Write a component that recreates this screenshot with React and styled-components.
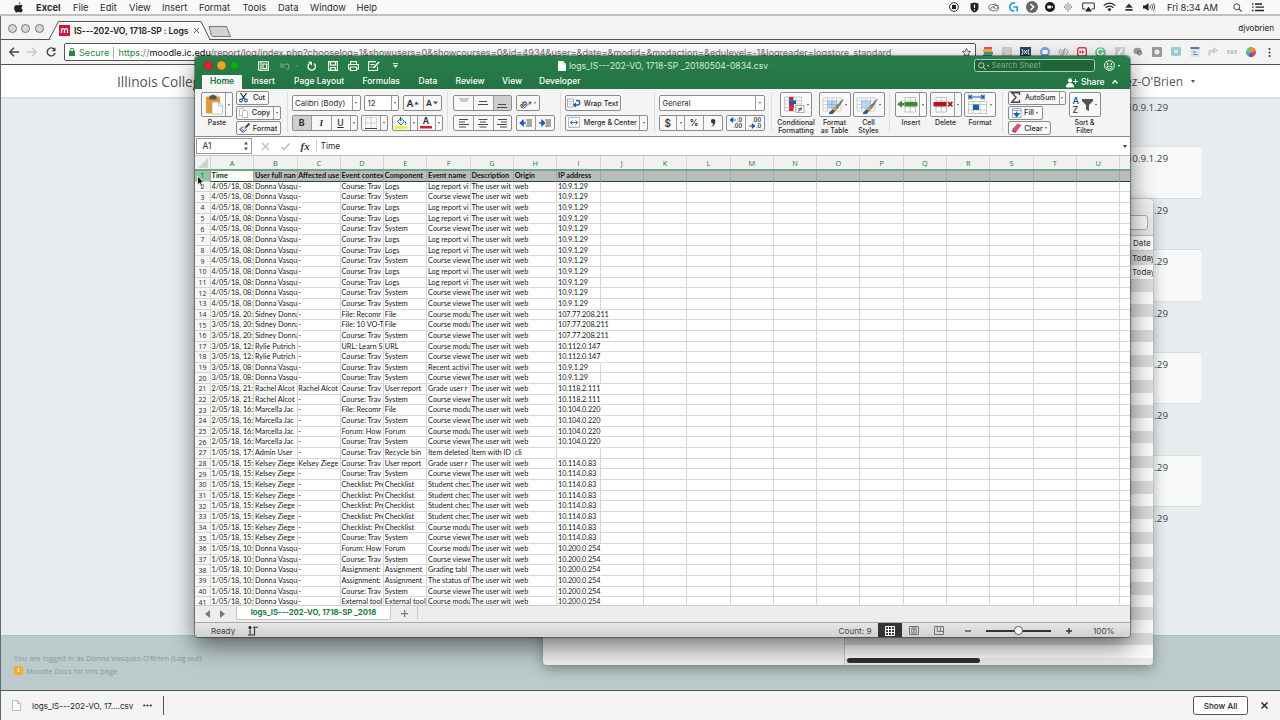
import React from "react";
import styled, { createGlobalStyle, css } from "styled-components";

const Global = createGlobalStyle`
  * { box-sizing: border-box; }
  html, body { margin: 0; padding: 0; overflow: hidden; }
  body { font-family: Inter, "Liberation Sans", sans-serif; color: #2b2b2b; }
  svg { display: block; flex: none; overflow: visible; }
`;

/* ---------- shared ---------- */
const Desktop = styled.div`
  position: relative;
  width: 1280px;
  height: 720px;
  overflow: hidden;
  display: flex;
  flex-direction: column;
  background: #e7ecef;
`;
const Text = styled.span`
  white-space: nowrap;
  flex: none;
  font-size: ${(p) => p.$size || 8}px;
  font-weight: ${(p) => p.$weight || 400};
  letter-spacing: ${(p) => p.$track || 0}px;
  color: ${(p) => p.$color || "inherit"};
  margin-left: ${(p) => p.$ml || 0}px;
  width: ${(p) => (p.$w ? p.$w + "px" : "auto")};
`;
const Caret = styled.span`
  flex: none;
  width: 0;
  height: 0;
  margin-left: ${(p) => p.$ml || 0}px;
  border: ${(p) => p.$s || 2}px solid transparent;
  border-top: ${(p) => (p.$s || 2) * 1.4}px solid ${(p) => p.$color || "#555"};
  border-bottom: 0;
`;
const Icon = ({ w = 12, h = w, box, children, ...rest }) => (
  <svg width={w} height={h} viewBox={box || `0 0 ${w} ${h}`} fill="none" {...rest}>
    {children}
  </svg>
);

/* ---------- mac menu bar ---------- */
const MenuBar = styled.header`
  height: 16px;
  flex: none;
  display: flex;
  align-items: center;
  background: #f9f9f9;
  border-bottom: 2px solid #bcc1c5;
  padding: 0 7px 0 13px;
  font-size: 9.4px;
`;
const MenuItem = styled.span`
  width: ${(p) => p.$w}px;
  flex: none;
  white-space: nowrap;
  font-weight: ${(p) => (p.$bold ? 700 : 400)};
`;
const Tray = styled.div`
  margin-left: auto;
  display: flex;
  align-items: center;
`;
const Slot = styled.span`
  width: ${(p) => p.$w}px;
  flex: none;
  display: flex;
  align-items: center;
  justify-content: center;
`;

/* ---------- browser ---------- */
const Browser = styled.main`
  flex: 1;
  display: flex;
  flex-direction: column;
  border-left: 1px solid #63686b;
  min-height: 0;
`;
const TabStrip = styled.div`
  height: 24px;
  flex: none;
  display: flex;
  background: #f3f3f3;
  border-bottom: 1px solid #555;
`;
const Dots = styled.div`
  display: flex;
  gap: 4.6px;
  padding: 8px 0 0 6.6px;
  width: 49px;
`;
const Dot = styled.i`
  width: 9px;
  height: 9px;
  border-radius: 50%;
  background: ${(p) => p.$c};
  border: 1px solid ${(p) => p.$b || p.$c};
`;
const BrowserTab = styled.div`
  position: relative;
  width: 160px;
  height: 24px;
  display: flex;
  align-items: center;
  padding: 5px 0 0 9px;
`;
const TabShape = styled.svg`
  position: absolute;
  inset: 0;
`;
const TabBody = styled.div`
  position: relative;
  display: flex;
  align-items: center;
  flex: 1;
  height: 14px;
`;
const Account = styled.div`
  margin-left: auto;
  padding: 7px 6px 0 0;
  font-size: 8.1px;
  color: #222;
`;
const Toolbar = styled.div`
  height: 25px;
  flex: none;
  display: flex;
  align-items: center;
  background: #f3f3f3;
  border-bottom: 1px solid #555;
  padding: 0 1px 0 5px;
`;
const Omnibox = styled.div`
  width: 913px;
  height: 18px;
  margin-left: 5px;
  border: 1px solid #555;
  border-radius: 2px;
  background: #fff;
  display: flex;
  align-items: center;
  padding: 0 4px 0 4px;
  font-size: 9.1px;
`;
const SecureMark = styled.span`
  color: #2c8541;
  width: 35px;
  flex: none;
  margin: 0 4.5px 0 4px;
  padding-right: 3px;
  border-right: 1px solid #9aa;
  white-space: nowrap;
`;
const Url = styled.span`
  flex: 1;
  color: #707070;
  white-space: nowrap;
  letter-spacing: ${(p) => p.$track}px;
  b { font-weight: 400; color: #111; }
  em { font-style: normal; color: #2c8541; }
`;
const Extensions = styled.div`
  display: flex;
  margin-left: 3px;
`;
const SiteHeader = styled.div`
  height: 34px;
  flex: none;
  background: #fff;
  border-bottom: 2px solid #d9dddf;
  display: flex;
  align-items: center;
  justify-content: space-between;
  padding: 1px 85px 0 116px;
  font-family: "Open Sans", "Noto Sans", sans-serif;
  color: #555;
`;
const SiteBody = styled.div`
  height: 540px;
  flex: none;
  padding: 0 79px 0 900px;
  margin-top: -4px;
`;
const LogRow = styled.div`
  height: 51.4px;
  padding: 5px 33px 0 0;
  text-align: right;
  font: 9.8px "Open Sans", "Noto Sans", sans-serif;
  line-height: 14px;
  color: #3c4656;
  background: ${(p) => (p.$light ? "#f7f8f8" : "transparent")};
  border-top: 1px solid ${(p) => (p.$first ? "transparent" : "#d9dde0")};
`;
const SiteFooter = styled.footer`
  flex: 1;
  background: #bbcaca;
  border-top: 1px solid #b0bfbf;
  padding: 16px 0 0 13px;
  font: 7.5px "Open Sans", "Noto Sans", sans-serif;
  color: #8b9797;
  display: flex;
  flex-direction: column;
  gap: 2px;
`;
const FooterLine = styled.div`
  height: 11px;
  display: flex;
  align-items: center;
  white-space: nowrap;
`;
const Info = styled.span`
  width: 9px;
  height: 9px;
  margin-right: 3px;
  border-radius: 1px;
  background: #f0ad2e;
  color: #fff;
  font: bold 7px/9px "Liberation Serif", serif;
  text-align: center;
`;
const DownloadBar = styled.div`
  height: 30px;
  flex: none;
  background: #f4f4f4;
  border-top: 1px solid #555;
  display: flex;
  align-items: center;
  padding: 0 12px 0 11px;
  color: #222;
`;
const BarRule = styled.i`
  width: 1px;
  height: 19px;
  background: #555;
  margin-left: 2px;
`;
const ShowAll = styled.button`
  margin: 0 13px 0 auto;
  width: 55px;
  height: 19px;
  padding: 0;
  border: 1px solid #555;
  border-radius: 2.5px;
  background: #fff;
  font: 500 8.1px Inter, sans-serif;
  color: #222;
`;

/* ---------- finder ---------- */
const Finder = styled.section`
  position: absolute;
  left: 543px;
  top: 199px;
  width: 610px;
  height: 466px;
  border-radius: 4px;
  overflow: hidden;
  background: #f6f6f6;
  box-shadow: 0 4px 14px rgba(0, 0, 0, 0.32), 0 0 1px rgba(0, 0, 0, 0.6);
  display: flex;
  flex-direction: column;
`;
const FinderTop = styled.div`
  height: 37px;
  flex: none;
  background: linear-gradient(#f1f1f1, #e2e2e2);
  border-bottom: 1px solid #b5b5b5;
  display: flex;
  justify-content: flex-end;
  padding: 16px 5px 0 0;
`;
const FinderSearch = styled.div`
  width: 120px;
  height: 15px;
  border: 1px solid #aaa;
  border-radius: 3px;
  background: #f6f6f6;
`;
const FinderSplit = styled.div`
  flex: 1;
  display: flex;
  min-height: 0;
`;
const FinderSide = styled.div`
  width: 302px;
  flex: none;
  border-right: 1px solid #c4c4c4;
  background: #efefef;
`;
const FinderList = styled.div`
  width: 308px;
  flex: none;
  display: flex;
  flex-direction: column;
  font-size: 8.1px;
`;
const FinderRow = styled.div`
  height: ${(p) => p.$h || 12.63}px;
  flex: none;
  background: ${(p) => (p.$dark ? "#dadada" : "#fafafa")};
  border-bottom: ${(p) => (p.$line ? "1px solid #c6c6c6" : 0)};
  padding-left: ${(p) => p.$pl || 287}px;
  white-space: nowrap;
  display: flex;
  align-items: center;
  color: #333;
`;
const ScrollTrack = styled.div`
  flex: 1;
  background: #e9e9e7;
  padding: 0 0 0 2px;
`;
const ScrollThumb = styled.div`
  width: 133px;
  height: 5px;
  border-radius: 3px;
  background: #303030;
`;

/* ---------- excel ---------- */
const Excel = styled.section`
  position: absolute;
  left: 195px;
  top: 56px;
  width: 935px;
  height: 581px;
  border-radius: 4px;
  overflow: hidden;
  background: #fff;
  display: flex;
  flex-direction: column;
`;
const ExcelShadow = styled.div`
  position: absolute;
  left: 195px;
  top: 56px;
  width: 935px;
  height: 581px;
  border-radius: 4px;
  box-shadow: 0 9px 24px rgba(0, 0, 0, 0.52), 0 0 1px 0.5px rgba(0, 0, 0, 0.4);
`;
const GreenHead = styled.div`
  height: 33px;
  flex: none;
  background: linear-gradient(#277f48, #247343);
  color: #fff;
`;
const TitleRow = styled.div`
  height: 19px;
  display: flex;
  align-items: center;
  padding-left: 8.5px;
`;
const Lights = styled.div`
  display: flex;
  flex: none;
  gap: 4.3px;
  width: 49.5px;
`;
const DocMark = styled.span`
  flex: none;
  margin-left: 141.5px;
`;
const SearchSheet = styled.div`
  width: 121px;
  height: 13px;
  flex: none;
  margin-left: 205px;
  border: 1px solid #a9cdb6;
  border-radius: 2.5px;
  background: #1f6339;
  display: flex;
  align-items: center;
  padding-left: 3px;
  color: #83b094;
`;
const RibbonTabs = styled.div`
  height: 14px;
  display: flex;
  align-items: center;
  padding-left: 7px;
  font-size: 8.5px;
  font-weight: 500;
`;
const RibbonTab = styled.span`
  flex: none;
  width: ${(p) => p.$w}px;
  height: 14px;
  line-height: 13.6px;
  white-space: nowrap;
  ${(p) =>
    p.$active &&
    css`
      background: #f6f6f6;
      color: #20723f;
      text-align: center;
      border-radius: 1px 1px 0 0;
      font-weight: 600;
    `}
`;
const Ribbon = styled.div`
  height: 48px;
  flex: none;
  display: flex;
  background: #f4f4f4;
  padding-left: 6px;
  border-bottom: 1px solid #8a8a8a;
`;
const Stack = styled.div`
  flex: none;
  width: ${(p) => p.$w}px;
  margin-right: ${(p) => p.$mr || 0}px;
  padding-top: ${(p) => p.$pt ?? 6}px;
  display: flex;
  flex-direction: column;
  align-items: ${(p) => (p.$center ? "center" : "flex-start")};
  gap: ${(p) => p.$gap ?? 3.7}px;
`;
const Divider = styled.i`
  width: 1px;
  height: 40px;
  margin: 3px ${(p) => p.$mr || 5}px 0 0;
  background: #dedede;
  flex: none;
`;
const Line = styled.div`
  display: flex;
  align-items: center;
  gap: ${(p) => p.$gap || 3.5}px;
`;
const Frame = styled.div`
  display: flex;
  height: ${(p) => p.$h || 16}px;
  border: 1px solid #8b8b8b;
  border-radius: 2px;
  background: ${(p) => (p.$white ? "#fff" : "#f8f8f8")};
  overflow: hidden;
  flex: none;
`;
const Seg = styled.div`
  width: ${(p) => p.$w}px;
  display: flex;
  align-items: center;
  justify-content: ${(p) => (p.$left ? "flex-start" : "center")};
  padding-left: ${(p) => p.$pl || 0}px;
  gap: ${(p) => p.$gap || 0}px;
  background: ${(p) => (p.$on ? "#cfcfcf" : "transparent")};
  font-size: 7.3px;
  font-weight: 500;
  white-space: nowrap;
  & + & { border-left: 1px solid #9b9b9b; }
`;
const Caption = styled.div`
  font-size: 6.9px;
  line-height: 8px;
  font-weight: 500;
  text-align: center;
  white-space: pre;
  margin-top: 1.6px;
`;
const FormulaBar = styled.div`
  height: 19px;
  flex: none;
  display: flex;
  align-items: center;
  background: #fff;
  border-bottom: 1.5px solid #c3c3c3;
  font-size: 8.4px;
  padding: 0 3.5px 0 0.5px;
`;
const NameBox = styled.div`
  width: 56px;
  height: 16px;
  flex: none;
  border: 1px solid #9a9a9a;
  display: flex;
  align-items: center;
  justify-content: space-between;
  padding: 0 2px 0 6px;
`;
const Fx = styled.span`
  width: 16px;
  flex: none;
  margin: 0 4px 0 10px;
  border-right: 1px solid #ccc;
  font: italic 600 11px/12px "Liberation Serif", serif;
  color: #333;
`;
const Spacer = styled.span`
  flex: 1;
`;
const Sheet = styled.div`
  height: 449px;
  flex: none;
  overflow: hidden;
  background: #fff;
`;
const ColHeads = styled.div`
  display: flex;
  height: 15px;
  background: #f1f1f1;
  border-bottom: 2px solid #6ea883;
`;
const Corner = styled.div`
  width: 15px;
  flex: none;
  display: flex;
  align-items: center;
  justify-content: flex-end;
  padding-right: 2px;
`;
const ColHead = styled.div`
  width: 43.31px;
  flex: none;
  text-align: center;
  font: 7.4px/14px "Open Sans", sans-serif;
  color: #28764a;
  border-left: 1px solid #d5d5d5;
`;
const GridRow = styled.div`
  display: flex;
  height: 10.667px;
  font: 7.3px Lato, "Open Sans", sans-serif;
  color: #161616;
  ${(p) =>
    p.$head &&
    css`
      background: #bcbcbc;
      font-weight: 700;
    `}
`;
const RowHead = styled.div`
  width: 15px;
  flex: none;
  display: flex;
  align-items: center;
  justify-content: center;
  background: ${(p) => (p.$on ? "#8bc69f" : "#f7f7f7")};
  color: ${(p) => (p.$on ? "#20653d" : "#222")};
  border-bottom: 1px solid #d4d4d4;
  font-family: "Open Sans", sans-serif;
  font-size: 6.9px;
  font-weight: 400;
`;
const Cell = styled.div`
  width: 43.31px;
  flex: none;
  border-left: 1px solid ${(p) => (p.$open ? "transparent" : p.$head ? "#a5a5a5" : "#d6d6d6")};
  border-bottom: 1px solid ${(p) => (p.$head ? "#15512f" : "#d9d9d9")};
  background: ${(p) => (p.$picked ? "#fff" : "transparent")};
  padding-left: 0.6px;
  overflow: ${(p) => (p.$spill ? "visible" : "hidden")};
  white-space: nowrap;
  line-height: 10.8px;
  letter-spacing: ${(p) => (p.$spill ? -0.07 : 0)}px;
`;
const SheetTabs = styled.div`
  height: 17px;
  flex: none;
  display: flex;
  background: #ededed;
  border-top: 1px solid #ccc;
  align-items: flex-start;
  padding-left: 8px;
`;
const SheetTab = styled.div`
  width: 155px;
  height: 14px;
  flex: none;
  margin-left: 3px;
  background: #fff;
  border: 1px solid #c9c9c9;
  border-top: 0;
  text-align: center;
  font: 700 7.75px/13px Inter, sans-serif;
  color: #217a43;
  white-space: nowrap;
`;
const TabRule = styled.i`
  width: 1px;
  height: 13px;
  background: #c9c9c9;
`;
const ArrowBox = styled.svg`
  margin-top: 4px;
`;
const StatusBar = styled.div`
  flex: 1;
  display: flex;
  align-items: center;
  background: linear-gradient(#e6e6e6, #cecece);
  border-top: 1px solid #aaa;
  padding: 0 0 1px 16px;
  color: #444;
`;
const ViewBtn = styled.div`
  width: 24.3px;
  height: 15px;
  flex: none;
  display: flex;
  align-items: center;
  justify-content: center;
  background: ${(p) => (p.$on ? "#333" : "transparent")};
`;
const Slider = styled.div`
  width: 65px;
  height: 2px;
  background: #333;
  margin: 0 15px;
  display: flex;
  align-items: center;
  justify-content: center;
`;
const Knob = styled.i`
  width: 8.6px;
  height: 8.6px;
  border-radius: 50%;
  background: #fff;
  border: 1px solid #555;
  flex: none;
`;
const Pointer = styled.svg`
  position: absolute;
  left: 196px;
  top: 175px;
`;
const SerifI = styled.span`
  font: italic 700 9.2px "Liberation Serif", serif;
`;
const Underlined = styled.span`
  font-size: 8.6px;
  text-decoration: underline;
  text-underline-offset: 1px;
`;
const TightA = styled.span`
  display: block;
  font-size: 8.6px;
  font-weight: 600;
  line-height: 8.5px;
`;
const SortLetters = styled.div`
  width: 8px;
  display: flex;
  flex-direction: column;
  font-size: 9px;
  line-height: 9px;
  b { color: #1c5da8; font-weight: 600; }
  span { color: #444; }
`;
const DecBox = styled.div`
  font: 600 5.6px/6px Inter, sans-serif;
  width: 13px;
  display: flex;
  flex-direction: column;
  div { display: flex; align-items: center; justify-content: flex-end; height: 6px; gap: 1px; }
`;

/* ---------- data ---------- */
const DONNA = "Donna Vasqu";
const COURSE = "Course: Trav";
const logs = [COURSE, "Logs", "Log report vi"];
const sys = [COURSE, "System", "Course viewe"];
const row = (t, user, kind, ip, affected = "-", desc = "The user wit", origin = "web") => [
  t, user, affected, kind[0], kind[1], kind[2], desc, origin, ip,
];
const modu = (a, b) => [a, b, "Course modu"];
const T4 = "4/05/18, 08:";
const ROWS = [
  ...[logs, sys, logs, logs, sys, logs, logs, sys, logs, logs, sys, sys].map((k) => row(T4, DONNA, k, "10.9.1.29")),
  row("3/05/18, 20:", "Sidney Donna", modu("File: Recomr", "File"), "107.77.208.211"),
  row("3/05/18, 20:", "Sidney Donna", modu("File: 10 VO-T", "File"), "107.77.208.211"),
  row("3/05/18, 20:", "Sidney Donna", sys, "107.77.208.211"),
  row("3/05/18, 12:", "Rylie Putrich", modu("URL: Learn S", "URL"), "10.112.0.147"),
  row("3/05/18, 12:", "Rylie Putrich", sys, "10.112.0.147"),
  row("3/05/18, 08:", DONNA, [COURSE, "System", "Recent activi"], "10.9.1.29"),
  row("3/05/18, 08:", DONNA, sys, "10.9.1.29"),
  row("2/05/18, 21:", "Rachel Alcot", [COURSE, "User report", "Grade user r"], "10.118.2.111", "Rachel Alcot"),
  row("2/05/18, 21:", "Rachel Alcot", sys, "10.118.2.111"),
  row("2/05/18, 16:", "Marcella Jac", modu("File: Recomr", "File"), "10.104.0.220"),
  row("2/05/18, 16:", "Marcella Jac", sys, "10.104.0.220"),
  row("2/05/18, 16:", "Marcella Jac", modu("Forum: How", "Forum"), "10.104.0.220"),
  row("2/05/18, 16:", "Marcella Jac", sys, "10.104.0.220"),
  row("1/05/18, 17:", "Admin User", [COURSE, "Recycle bin", "Item deleted"], "", "-", "Item with ID", "cli"),
  row("1/05/18, 15:", "Kelsey Ziege", [COURSE, "User report", "Grade user r"], "10.114.0.83", "Kelsey Ziege"),
  row("1/05/18, 15:", "Kelsey Ziege", sys, "10.114.0.83"),
  ...[0, 1, 2, 3].map((i) => row("1/05/18, 15:", "Kelsey Ziege", ["Checklist: Pre", "Checklist", "Student chec"], "10.114.0.83")),
  row("1/05/18, 15:", "Kelsey Ziege", modu("Checklist: Pre", "Checklist"), "10.114.0.83"),
  row("1/05/18, 15:", "Kelsey Ziege", sys, "10.114.0.83"),
  row("1/05/18, 10:", DONNA, modu("Forum: How", "Forum"), "10.200.0.254"),
  row("1/05/18, 10:", DONNA, sys, "10.200.0.254"),
  row("1/05/18, 10:", DONNA, ["Assignment:", "Assignment", "Grading tabl"], "10.200.0.254"),
  row("1/05/18, 10:", DONNA, ["Assignment:", "Assignment", "The status of"], "10.200.0.254"),
  row("1/05/18, 10:", DONNA, sys, "10.200.0.254"),
  row("1/05/18, 10:", DONNA, modu("External tool", "External tool"), "10.200.0.254"),
].filter(Boolean);
/* rows 30-33 are the student checks; row 34 is the module view */
const HEAD = ["Time", "User full nan", "Affected use", "Event contex", "Component", "Event name", "Description", "Origin", "IP address"];
const LETTERS = "ABCDEFGHIJKLMNOPQRSTU".split("");
const MENUS = [
  ["Excel", 37, true], ["File", 27], ["Edit", 29], ["View", 33], ["Insert", 37], ["Format", 43.5],
  ["Tools", 35.5], ["Data", 32], ["Window", 46.5], ["Help", 30],
];
const TABS = [
  ["Insert", 42.5], ["Page Layout", 68.5], ["Formulas", 56], ["Data", 37], ["Review", 46.5], ["View", 37], ["Developer", 50],
];

/* ---------- small drawings ---------- */
const Lines = ({ rows }) => (
  <Icon w={12} h={10}>
    {rows.map(([x, y, w]) => (
      <path key={y} d={`M${x} ${y}h${w}`} stroke="#4a4a4a" strokeWidth="1" />
    ))}
  </Icon>
);
const Indent = ({ flip }) => (
  <Icon w={12} h={8}>
    <path d="M6 1h6M7 3h5M7 5h5M6 7h6" stroke="#444" strokeWidth=".9" />
    <path d={flip ? "M0 4h3.5M3 1.6 5.6 4 3 6.4z" : "M2 4h4M3 1.6.4 4 3 6.4z"} stroke="#1c5da8" fill="#1c5da8" strokeWidth="1.5" />
  </Icon>
);
const Brush = () => (
  <g>
    <path d="M21 3.5 13.5 11l1.800 1.800z" fill="#888" stroke="#555" strokeWidth=".8" />
    <circle cx="13" cy="13" r="2.200" fill="#d99a36" />
    <path d="M11 13.800c-2 .5-2 2.600-4 3.400 2.400 1 5 .3 5.300-2z" fill="#1c5da8" stroke="#1c5da8" />
  </g>
);
const GridArt = ({ ruled }) => (
  <Icon w={23} h={18}>
    <path d="M1 2h18v13H1zM1 5h18M1 8.500h18M1 12h18M5.500 2v13M10 2v13M14.500 2v13" fill="#fff" stroke="#c4c4c4" strokeWidth=".8" />
    <rect x="5.500" y="5" width="9" height="7" fill="#b9d5f2" stroke="#8db8e4" strokeWidth=".7" />
    {ruled && <path d="M10 5v7M5.500 8.500h9" stroke="#7da9da" strokeWidth=".7" />}
    <Brush />
  </Icon>
);
const CellsArt = ({ color, kind }) => (
  <Icon w={21} h={19}>
    <path d={kind === "in" ? "M8 2.500h10.500v14.500H8zM8 6h10.500M8 12h10.500M13.200 2.500V17" : "M4 2.500h10.500v14.500H4zM4 6h10.500M4 12h10.500M9.200 2.500V17"} fill="#fff" stroke="#b5b5b5" strokeWidth=".8" />
    <rect x={kind === "in" ? 7.5 : 1.5} y="7" width="13" height="4.400" fill={color} />
    {kind === "in" ? (
      <path d="M5 5.500v7.200L0 9.200zM5 8h2v2.500H5z" fill={color} />
    ) : (
      <path d="m16 6.800 4.400 4.600m0-4.600L16 11.400" stroke="#a31520" strokeWidth="1.700" />
    )}
  </Icon>
);
const Magnifier = ({ s = 9, color = "#333" }) => (
  <Icon w={s} h={s} box="0 0 10 10">
    <circle cx="4.200" cy="4.200" r="3.300" stroke={color} />
    <path d="m6.700 6.700 3 3" stroke={color} strokeWidth="1.200" />
  </Icon>
);
const TabArrow = ({ w = 5, d }) => (
  <ArrowBox width={w} height="8"><path d={d} fill="#777" /></ArrowBox>
);
const Decimals = ({ lead }) => {
  const arrow = (
    <Icon w={6} h={4}>
      <path d={lead ? "M0 2 2.800-.3v4.600zM2 2h4" : "M6 2 3.200-.3v4.600zM0 2h4"} fill="#1c5da8" stroke="#1c5da8" strokeWidth=".9" />
    </Icon>
  );
  return (
    <DecBox>
      {lead ? <><div>{arrow}.0</div><div>.00</div></> : <><div>.00</div><div>{arrow}.0</div></>}
    </DecBox>
  );
};
const Drop = ({ w = 8 }) => <Seg $w={w}><Caret $s={1.8} /></Seg>;

function TrayIcons() {
  return (
    <Tray>
      <Slot $w={20}>
        <Icon w={10}><circle cx="5" cy="5" r="4.400" stroke="#333" /><rect x="3" y="3" width="4" height="4" fill="#222" /></Icon>
      </Slot>
      <Slot $w={20}>
        <Icon w={9} h={11}><path d="M4.500.5 8.500 1.500v4c0 2.500-1.500 4-4 5-2.500-1-4-2.500-4-5v-4z" fill="#222" /><path d="M4.500 2.500v3.600M4.500 7.200v1.300" stroke="#fff" strokeWidth="1.100" /></Icon>
      </Slot>
      <Slot $w={20}>
        <Icon w={13} h={10}><path d="M4 8.500a3 3 0 1 1 .8-5.800A3.700 3.700 0 1 1 9 8.800H4.500A2 2 0 1 1 6 5.300l2 1.800" stroke="#777" strokeWidth="1" /><path d="M6 6.500a2 2 0 1 1 2.800.5" stroke="#777" /></Icon>
      </Slot>
      <Slot $w={18}>
        <Icon w={11} h={10}><path d="M7.200 1.200A4 4 0 1 0 6.300 8.900" stroke="#2b9ad3" strokeWidth="1.700" /><path d="M5.500 5h3.700v4.500" stroke="#2b9ad3" strokeWidth="1.700" /></Icon>
      </Slot>
      <Slot $w={19}>
        <Icon w={12}><circle cx="6" cy="6" r="6" fill="#666" /><path d="m4.500 3 3.200 3-3.200 3" stroke="#fff" strokeWidth="1.500" /></Icon>
      </Slot>
      <Slot $w={17}>
        <Icon w={10}><circle cx="5" cy="5" r="5" fill="#161616" /><path d="M2.300 3.500h3.700v3H2.300zM6 5l1.800-1.300v2.600z" fill="#fff" /></Icon>
      </Slot>
      <Slot $w={19}>
        <Icon w={8} h={10}><path d="M4 0v10M2 2v6M6 2v6M.5 4v2M7.500 4v2" stroke="#888" strokeWidth=".9" /></Icon>
      </Slot>
      <Slot $w={23}>
        <Icon w={13} h={10}><path d="M3.500 7H.7V1h11.600v6H9.500" stroke="#333" /><path d="m6.500 4.800 3.500 4.700H3z" fill="#222" /></Icon>
      </Slot>
      <Slot $w={18}>
        <Icon w={13} h={10}><path d="M.8 3.600a8 8 0 0 1 11.400 0M2.700 5.700a5.300 5.300 0 0 1 7.600 0" stroke="#222" strokeWidth="1.300" /><path d="m6.500 9.500-2-2.200a2.800 2.800 0 0 1 4 0z" fill="#222" /></Icon>
      </Slot>
      <Slot $w={21}>
        <Icon w={8} h={8}><path d="m4 .5 3.800 4.300H.2zM.3 6h7.400v1.700H.3z" fill="#333" /></Icon>
      </Slot>
      <Slot $w={19}>
        <Icon w={12} h={10}><path d="M0 3.500h2.200L5.500 1v8L2.200 6.500H0z" fill="#222" /><path d="M7 3.500q1 1.500 0 3M8.700 2.200q2 2.800 0 5.600M10.500 1q2.600 4 0 8" stroke="#333" strokeWidth=".8" /></Icon>
      </Slot>
      <Text $size={9.3} $ml={9} $w={65} $track={-0.05}>Fri 8:34 AM</Text>
      <Slot $w={11}><Magnifier s={9} /></Slot>
      <Slot $w={30}>
        <Icon w={12} h={9}><path d="M3 1h7M3.500 4.200H12M3 7.500h9" stroke="#222" strokeWidth="1.300" /><path d="M0 1h1.500M0 4.200h1.500M0 7.500h1.500" stroke="#222" strokeWidth="1.300" /></Icon>
      </Slot>
    </Tray>
  );
}

function ExtensionIcons() {
  const items = [
    <Icon w={10}><path d="M1 0h8v2.500H1z" fill="#e2574c" /><path d="M0 2.500h9V5H0z" fill="#f1b23a" /><path d="M1 5h9v2.500H1z" fill="#3ca55c" /><path d="M0 7.500h9V10H0z" fill="#3d84c6" /></Icon>,
    <Icon w={10}><rect width="10" height="10" rx="1" fill="#ccc" /><path d="M7 3Q3 1.500 3 4t4 2-4 2" stroke="#eee" /></Icon>,
    <Icon w={11} h={10}><rect width="11" height="10" fill="#2c4268" /><path d="M2 2q2 3 0 6M9 2Q7 5 9 8M4 3l3 4M7 3 4 7" stroke="#fff" strokeWidth=".9" /></Icon>,
    <Icon w={10}><circle cx="5" cy="5" r="5" fill="#7ba6ea" /><rect x="2.300" y="3" width="5.400" height="4" rx="1" fill="#fff" /></Icon>,
    <Icon w={11} h={10}><path d="M3 2 .7 5 3 8M8 2l2.300 3L8 8M7 1 4 9" stroke="#999" /><circle cx="5.500" cy="5" r="1.800" stroke="#aaa" /></Icon>,
    <Icon w={10}><rect x=".7" y=".7" width="8.600" height="8.600" rx="1.800" fill="#fff" stroke="#d6404c" strokeWidth="1.400" /><path d="M2.500 3 5 5 2.500 7zM5 3l2.500 2L5 7z" fill="#d6404c" /></Icon>,
    <Icon w={11}><circle cx="5.500" cy="5.500" r="5.300" fill="#54c68c" /><path d="M8 3.500A3 3 0 1 0 8.300 6H6" stroke="#fff" strokeWidth="1.200" /></Icon>,
    <Icon w={10}><rect width="10" height="10" fill="#cfcfcf" /><path d="m3 8 4-6" stroke="#fff" strokeWidth="1.500" /></Icon>,
    <Icon w={10}><ellipse cx="4.500" cy="4" rx="4" ry="3.300" fill="#999" /><circle cx="6.500" cy="6" r="2" stroke="#666" /></Icon>,
    <Icon w={10}><rect width="10" height="10" rx="1" fill="#989898" /><circle cx="5" cy="5" r="2.500" fill="#eee" /></Icon>,
    <Icon w={10}><rect width="10" height="9" rx="1" fill="#9acdd2" /><circle cx="5" cy="4.500" r="1.800" fill="#d5f0f1" /></Icon>,
    <Icon w={10}><rect x=".5" width="9" height="10" fill="#dbe2ee" /><path d="M.5 1h9" stroke="#5b7db0" strokeWidth="2" /><path d="M3 5h3M3 7.500h5" stroke="#7288b0" /></Icon>,
    <Icon w={10}><path d="M1 9V3.500h5M5.500 1v5L9.500 3.500z" stroke="#c4c4c4" fill="#c4c4c4" strokeWidth="1" fillOpacity=".5" /></Icon>,
    <Icon w={10} h={4}><path d="M0 1h3M4 1h2M7 1h3M0 3h2M3 3h4M8 3h2" stroke="#bbb" strokeWidth="1.300" /></Icon>,
    <Icon w={10}><path d="M5 5V0a5 5 0 0 1 4.700 3.500z" fill="#f28b30" /><path d="M5 5l4.700-1.500A5 5 0 0 1 8 9z" fill="#e8453c" /><path d="M5 5l3 4a5 5 0 0 1-6 0z" fill="#9438b0" /><path d="M5 5 2 9A5 5 0 0 1 .3 3.500z" fill="#2ab3d6" /><path d="M5 5 .3 3.500A5 5 0 0 1 5 0z" fill="#73c043" /></Icon>,
    <Icon w={3} h={9}><circle cx="1.500" cy="1" r="1" fill="#333" /><circle cx="1.500" cy="4.500" r="1" fill="#333" /><circle cx="1.500" cy="8" r="1" fill="#333" /></Icon>,
  ];
  return <Extensions>{items.map((it, i) => <Slot key={i} $w={18.75}>{it}</Slot>)}</Extensions>;
}

function BrowserWindow() {
  return (
    <Browser>
      <TabStrip>
        <Dots>{[0, 1, 2].map((i) => <Dot key={i} $c="#d7d7d7" $b="#777" />)}</Dots>
        <BrowserTab>
          <TabShape width="185" height="24">
            <path d="M-1 23.500 8.500 5.500H151L160 23.500z" fill="#f8f8f8" />
            <path d="M-1 23.500 8.500 5.500H151l9 18" fill="none" stroke="#555" />
            <path d="M1 23.500h158" stroke="#f8f8f8" strokeWidth="1.500" />
            <path d="M159 10.500h17.500l4 10h-17.500q-1 0-1.500-1z" fill="#d2d2d2" stroke="#777" />
          </TabShape>
          <TabBody>
            <Icon w={11}><rect width="11" height="11" fill="#d2153a" /><path d="M2.500 8V3.800M2.500 5q0-1.300 1.500-1.300T5.500 5v3M5.500 5q0-1.300 1.500-1.300T8.500 5v3" stroke="#fff" strokeWidth="1.300" /></Icon>
            <Text $size={8.65} $weight={600} $ml={4} $w={119.5} $track={-0.1} $color="#222">IS---202-VO, 1718-SP : Logs</Text>
            <Icon w={5}><path d="m0 0 5 5M5 0 0 5" stroke="#555" /></Icon>
          </TabBody>
        </BrowserTab>
        <Account>djvobrien</Account>
      </TabStrip>
      <Toolbar>
        <Slot $w={15}><Icon w={10}><path d="M10 5H1M5 .7.8 5 5 9.300" stroke="#444" strokeWidth="1.400" /></Icon></Slot>
        <Slot $w={21}><Icon w={10}><path d="M0 5h9M5 .7 9.200 5 5 9.300" stroke="#c5c5c5" strokeWidth="1.300" /></Icon></Slot>
        <Slot $w={17}><Icon w={10}><path d="M8.500 2.500a4 4 0 1 0 .6 3.500" stroke="#444" strokeWidth="1.400" /><path d="M9.500.3v3.900H5.600z" fill="#444" /></Icon></Slot>
        <Omnibox>
          <Icon w={6} h={8}><rect y="3" width="6" height="5" rx=".6" fill="#2c8541" /><path d="M1.300 3V2a1.700 1.700 0 0 1 3.400 0v1" stroke="#2c8541" /></Icon>
          <SecureMark>Secure</SecureMark>
          <Url $track={0.04}><em>https</em>://<b>moodle.ic.edu</b>/report/log/index.php?chooselog=1&amp;showusers=0&amp;showcourses=0&amp;id=4934&amp;user=&amp;date=&amp;modid=&amp;modaction=&amp;edulevel=-1&amp;logreader=logstore_standard</Url>
          <Icon w={9} box="0 0 10 10"><path d="m5 .6 1.300 3 3.200.3-2.400 2.200.7 3.200L5 7.600 2.200 9.300l.7-3.200L.5 3.900l3.200-.3z" stroke="#444" strokeWidth=".9" /></Icon>
        </Omnibox>
        <ExtensionIcons />
      </Toolbar>
      <SiteHeader>
        <Text $size={13.7}>Illinois College</Text>
        <Line $gap={7}>
          <Text $size={12}>Donna Vasquez-O'Brien</Text>
          <Slot $w={5}><Caret $s={2.5} /></Slot>
        </Line>
      </SiteHeader>
      <SiteBody>
        {Array.from({ length: 9 }, (_, i) => <LogRow key={i} $first={i === 0} $light={i % 2 === 1}>10.9.1.29</LogRow>)}
      </SiteBody>
      <SiteFooter>
        <FooterLine>You are logged in as Donna Vasquez-O'Brien (Log out)</FooterLine>
        <FooterLine><Info>i</Info>Moodle Docs for this page</FooterLine>
      </SiteFooter>
      <DownloadBar>
        <Icon w={9} h={11}><path d="M.5.500h5l3 3v7h-8zM5.500.500v3h3" fill="#fff" stroke="#bbb" /></Icon>
        <Text $size={8.05} $ml={11} $w={102}>logs_IS---202-VO, 17....csv</Text>
        <Slot $w={27}><Icon w={9} h={3}><circle cx="1.200" cy="1.500" r="1.100" fill="#333" /><circle cx="4.500" cy="1.500" r="1.100" fill="#333" /><circle cx="7.800" cy="1.500" r="1.100" fill="#333" /></Icon></Slot>
        <BarRule />
        <ShowAll>Show All</ShowAll>
        <Icon w={7}><path d="m.5.500 6 6M6.500.500l-6 6" stroke="#222" strokeWidth="1.400" /></Icon>
      </DownloadBar>
    </Browser>
  );
}

function FinderWindow() {
  return (
    <Finder>
      <FinderTop><FinderSearch /></FinderTop>
      <FinderSplit>
        <FinderSide />
        <FinderList>
          <FinderRow $h={15} $line $pl={288}>Date A</FinderRow>
          <FinderRow $dark $h={14}>Today</FinderRow>
          <FinderRow $h={14}>Today</FinderRow>
          {Array.from({ length: 30 }, (_, i) => <FinderRow key={i} $dark={i % 2 === 0} />)}
          <ScrollTrack><ScrollThumb /></ScrollTrack>
        </FinderList>
      </FinderSplit>
    </Finder>
  );
}

function RibbonPanel() {
  return (
    <Ribbon>
      <Stack $w={32} $mr={2.5} $pt={3} $center $gap={0}>
        <Frame $h={25}>
          <Seg $w={23}>
            <Icon w={18} h={21}>
              <rect x="1" y="2.500" width="14" height="17" rx="1" fill="#e09a35" />
              <path d="M4.500 1.500h2a1.600 1.600 0 0 1 3 0h2v4h-7z" fill="#555" />
              <path d="M7 8h6.500l4 4v8H7z" fill="#fff" stroke="#aaa" strokeWidth=".7" /><path d="M13.500 8v4h4" stroke="#aaa" strokeWidth=".7" />
            </Icon>
          </Seg>
          <Drop w={7} />
        </Frame>
        <Caption>Paste</Caption>
      </Stack>
      <Stack $w={45} $mr={6} $pt={1.5} $gap={0.7}>
        <Frame $h={14.5}>
          <Seg $w={31} $gap={5}>
            <Icon w={9}><path d="M1.500 0 6 6.500M7.500 0 3 6.500" stroke="#222" strokeWidth="1.200" /><circle cx="2" cy="7.500" r="1.400" stroke="#1c5da8" strokeWidth="1.100" /><circle cx="7" cy="7.500" r="1.400" stroke="#1c5da8" strokeWidth="1.100" /></Icon>
            Cut
          </Seg>
        </Frame>
        <Frame $h={14.5}>
          <Seg $w={36} $gap={4}>
            <Icon w={9} h={10}><path d="M.5.500h4l1 1v6h-5z" fill="#fff" stroke="#aaa" strokeWidth=".8" /><path d="M3.500 2.500h3.500l1.500 1.500v5.500h-5z" fill="#fff" stroke="#aaa" strokeWidth=".8" /></Icon>
            Copy
          </Seg>
          <Drop w={7} />
        </Frame>
        <Frame $h={14.5}>
          <Seg $w={43} $gap={3}>
            <Icon w={11} h={10}><path d="M10.500.500 6.500 4.500" stroke="#444" strokeWidth="2" /><path d="M4 3.500 7.500 7 4 9.500.5 6z" fill="#e5eefa" stroke="#1c5da8" strokeWidth=".8" /><path d="M1 6.500 4 9.300M2.500 5.500l3 3" stroke="#333" strokeWidth=".8" /></Icon>
            Format
          </Seg>
        </Frame>
      </Stack>
      <Divider $mr={4} />
      <Stack $w={149} $mr={6.5}>
        <Line>
          <Frame $white>
            <Seg $w={59} $left $pl={2.5}><Text $size={7.8}>Calibri (Body)</Text></Seg>
            <Drop />
          </Frame>
          <Frame $white><Seg $w={26} $left $pl={2.5}><Text $size={7.8}>12</Text></Seg><Drop w={7} /></Frame>
          <Frame>
            <Seg $w={19} $gap={1}><Text $size={9.6} $weight={600}>A</Text><Icon w={5} h={4}><path d="M2.500.500 5 3.500H0z" fill="#1c5da8" /></Icon></Seg>
            <Seg $w={18} $gap={1}><Text $size={8.2} $weight={600}>A</Text><Icon w={5} h={4}><path d="M0 .5h5L2.500 3.500z" fill="#1c5da8" /></Icon></Seg>
          </Frame>
        </Line>
        <Line>
          <Frame>
            <Seg $w={18.5} $on><Text $size={8.8} $weight={700}>B</Text></Seg>
            <Seg $w={19.5}><SerifI>I</SerifI></Seg>
            <Seg $w={19}><Underlined>U</Underlined></Seg>
            <Drop w={7} />
          </Frame>
          <Frame>
            <Seg $w={18}><Icon w={12}><path d="M.5.500h11v11H.5zM6 .5v11M.5 6h11" stroke="#aaa" strokeWidth=".8" strokeDasharray="1 .8" /><path d="M0 11.500h12" stroke="#444" /></Icon></Seg>
            <Drop w={7} />
          </Frame>
          <Frame>
            <Seg $w={17}><Icon w={12}><path d="M6 1 9.500 4.500 6 8 2.500 4.500z" fill="#dfeaf7" stroke="#1c5da8" strokeWidth=".9" /><path d="M5.500 0v4M10 4.500q1.500 2 .5 3" stroke="#1c5da8" /><path d="M0 10.500h12" stroke="#f2ee21" strokeWidth="2.600" /></Icon></Seg>
            <Drop w={7} />
            <Seg $w={18}><Stack $w={12} $pt={0} $gap={0} $center><TightA>A</TightA><Icon w={12} h={2.4}><path d="M0 1.200h12" stroke="#d81e2c" strokeWidth="2.400" /></Icon></Stack></Seg>
            <Drop w={7} />
          </Frame>
        </Line>
      </Stack>
      <Divider />
      <Stack $w={101} $mr={5.5}>
        <Line>
          <Frame>
            <Seg $w={19}><Icon w={10} h={10}><path d="M0 1h10M1.500 3h7" stroke="#999" strokeWidth="1.200" /></Icon></Seg>
            <Seg $w={19.5}><Lines rows={[[2, 3.5, 8], [1, 6.5, 10]]} /></Seg>
            <Seg $w={18.5} $on><Lines rows={[[2, 6.5, 8], [1, 9.5, 10]]} /></Seg>
          </Frame>
          <Frame>
            <Seg $w={22.5} $gap={2}>
              <Icon w={12} h={12}><text x="-1" y="9" fontSize="7" fontWeight="600" fill="#333" fontFamily="Inter" transform="rotate(-40 4 7)">ab</text><path d="M3.500 11.500 11 5M11 5l-.3 2.500M11 5l-2.500.3" stroke="#1c5da8" strokeWidth=".9" /></Icon>
              <Caret $s={1.8} />
            </Seg>
          </Frame>
        </Line>
        <Line>
          <Frame>
            <Seg $w={19}><Lines rows={[[1, 1.5, 9], [1, 4, 6], [1, 6.5, 10], [1, 9, 7]]} /></Seg>
            <Seg $w={19.5}><Lines rows={[[1.5, 1.5, 9], [3, 4, 6], [1, 6.5, 10], [2.5, 9, 7]]} /></Seg>
            <Seg $w={18.5}><Lines rows={[[2, 1.5, 9], [5, 4, 6], [1, 6.5, 10], [4, 9, 7]]} /></Seg>
          </Frame>
          <Frame><Seg $w={18.5}><Indent /></Seg><Seg $w={19}><Indent flip /></Seg></Frame>
        </Line>
      </Stack>
      <Divider $mr={4} />
      <Stack $w={83} $mr={6}>
        <Frame>
          <Seg $w={54.5} $gap={3.5}>
            <Icon w={13} h={10}><path d="M.5 1h6v8h-6z" fill="#fff" stroke="#999" strokeWidth=".8" /><path d="M1.500 3.500h4M1.500 6h4" stroke="#aaa" strokeWidth=".8" /><path d="M9 2.500h1.500a2.200 2.200 0 0 1 0 4.500H7.500" stroke="#1c5da8" strokeWidth="1.300" /><path d="M9 4.500v5L5.800 7z" fill="#1c5da8" /></Icon>
            <Text $size={7.1} $weight={500}>Wrap Text</Text>
          </Seg>
        </Frame>
        <Frame>
          <Seg $w={73.5} $gap={4}>
            <Icon w={12} h={11}><path d="M.5.500h11v10H.5z" fill="#fff" stroke="#aaa" strokeWidth=".8" /><path d="M2.500 5.500h7M4.500 3.500l-2.200 2 2.200 2M7.500 3.500l2.200 2-2.200 2" stroke="#1c5da8" strokeWidth=".9" /></Icon>
            <Text $size={7.1} $weight={500}>Merge &amp; Center</Text>
          </Seg>
          <Drop w={8} />
        </Frame>
      </Stack>
      <Divider $mr={4} />
      <Stack $w={106} $mr={6}>
        <Frame $white><Seg $w={95.5} $left $pl={3}><Text $size={7.6}>General</Text></Seg><Drop w={8.5} /></Frame>
        <Line $gap={3}>
          <Frame>
            <Seg $w={16.5}><Text $size={10} $weight={500}>$</Text></Seg>
            <Drop w={8} />
            <Seg $w={19}><Text $size={9} $weight={500}>%</Text></Seg>
            <Seg $w={18.5}><Icon w={6} h={8}><path d="M3 0a2.300 2.300 0 0 1 2.300 2.500C5.300 5 4 6.800 1.800 7.700L1.500 7c1.300-.8 1.800-1.700 1.700-2.600A2.200 2.200 0 1 1 3 0z" fill="#333" /></Icon></Seg>
          </Frame>
          <Frame>
            <Seg $w={18.5}><Decimals lead /></Seg>
            <Seg $w={18.5}><Decimals /></Seg>
          </Frame>
        </Line>
      </Stack>
      <Divider $mr={2} />
      <Stack $w={45} $pt={3} $center $gap={0}>
        <Frame $h={25}>
          <Seg $w={30} $gap={2}>
            <Icon w={21} h={19}>
              <path d="M.5 2h17v14H.5zM.5 5.500h17M.5 9h17M.5 12.500h17M6 2v14M12 2v14" fill="#fff" stroke="#bbb" strokeWidth=".8" />
              <path d="M5 2h4.500v3.500H5zM5 12.500h4.500V16H5z" fill="#c9243a" /><path d="M5 5.500h7V9H5z" fill="#1c5da8" /><path d="M5 9h5v3.500H5z" fill="#c9243a" />
              <rect x="12" y="10.500" width="8" height="7" fill="#fff" stroke="#999" strokeWidth=".8" /><path d="M14 13.500h4M14 15h4M17.500 12l-3 5" stroke="#444" strokeWidth=".7" />
            </Icon>
            <Caret $s={1.8} />
          </Seg>
        </Frame>
        <Caption>{"Conditional\nFormatting"}</Caption>
      </Stack>
      <Stack $w={32} $mr={2} $pt={3} $center $gap={0}>
        <Frame $h={25}><Seg $w={30}><GridArt ruled /><Caret $s={1.8} /></Seg></Frame>
        <Caption>{"Format\nas Table"}</Caption>
      </Stack>
      <Stack $w={32} $mr={4.5} $pt={3} $center $gap={0}>
        <Frame $h={25}><Seg $w={30}><GridArt /><Caret $s={1.8} /></Seg></Frame>
        <Caption>{"Cell\nStyles"}</Caption>
      </Stack>
      <Divider />
      <Stack $w={32} $mr={2.5} $pt={3} $center $gap={0}>
        <Frame $h={25}><Seg $w={23}><CellsArt color="#3b8d2e" kind="in" /></Seg><Drop w={7} /></Frame>
        <Caption>Insert</Caption>
      </Stack>
      <Stack $w={32} $mr={2.5} $pt={3} $center $gap={0}>
        <Frame $h={25}><Seg $w={23}><CellsArt color="#b3141f" kind="del" /></Seg><Drop w={7} /></Frame>
        <Caption>Delete</Caption>
      </Stack>
      <Stack $w={32} $mr={5.5} $pt={3} $center $gap={0}>
        <Frame $h={25}>
          <Seg $w={30} $gap={4}>
            <Icon w={18} h={21}>
              <path d="M1 3h15M1 .5v5M16 .5v5M4 1 1.500 3 4 5M13 1l2.500 2L13 5" stroke="#1c5da8" strokeWidth="1.200" />
              <path d="M.5 7.500h18v12H.5zM.5 10.500h18M.5 16h18M5 7.500v12M12 7.500v12" fill="#fff" stroke="#bbb" strokeWidth=".8" /><rect x="5" y="10.500" width="6" height="5.500" fill="#1c5da8" />
            </Icon>
            <Caret $s={1.8} />
          </Seg>
        </Frame>
        <Caption>Format</Caption>
      </Stack>
      <Divider />
      <Stack $w={58} $mr={3} $pt={1.5} $gap={0.7}>
        <Frame $h={14.5}>
          <Seg $w={50} $gap={4.5}><Icon w={9} h={11}><path d="M8.500 3V.8H.8l4.200 4.500L.8 10.200h7.700V8" stroke="#444" strokeWidth="1.400" /></Icon><Text $size={7} $weight={500}>AutoSum</Text></Seg>
          <Drop w={6.5} />
        </Frame>
        <Frame $h={14.5}>
          <Seg $w={33} $gap={2.5}><Icon w={10}><path d="M.5.500h8.500v9H.5zM.5 2.500H9" fill="#fff" stroke="#8ba5c4" strokeWidth=".9" /><path d="M4.700 3.500v2M2.300 5.500h4.800L4.700 8.500z" fill="#1c5da8" stroke="#1c5da8" strokeWidth="1.200" /></Icon>Fill<Caret $s={1.7} /></Seg>
        </Frame>
        <Frame $h={14.5}>
          <Seg $w={41} $gap={2.5}><Icon w={11} h={10}><path d="m1 6.500 5.500-6L10.500 2 5.500 8.500z" fill="#d65372" /><path d="m1 6.500 4.500 2L5 9.800 1.500 9z" fill="#b02c50" /></Icon>Clear<Caret $s={1.7} /></Seg>
        </Frame>
      </Stack>
      <Stack $w={32} $pt={3} $center $gap={0}>
        <Frame $h={25}>
          <Seg $w={30} $gap={2}>
            <Line $gap={1}>
              <SortLetters><b>A</b><span>Z</span></SortLetters>
              <Icon w={11} h={14}><path d="M0 1h11v2L7 7v6l-3-1.500V7L0 3z" fill="#555" /></Icon>
            </Line>
            <Caret $s={1.8} />
          </Seg>
        </Frame>
        <Caption>{"Sort &\nFilter"}</Caption>
      </Stack>
    </Ribbon>
  );
}

function Grid() {
  return (
    <Sheet>
      <ColHeads>
        <Corner><Icon w={10} h={10}><path d="M10 0v10H0z" fill="#d0d0d0" /></Icon></Corner>
        {LETTERS.map((l) => <ColHead key={l}>{l}</ColHead>)}
        <ColHead />
      </ColHeads>
      <GridRow $head>
        <RowHead $on>1</RowHead>
        {Array.from({ length: 22 }, (_, c) => (
          <Cell key={c} $head $picked={c === 0}>{HEAD[c]}</Cell>
        ))}
      </GridRow>
      {ROWS.map((r, i) => (
        <GridRow key={i}>
          <RowHead>{i + 2}</RowHead>
          {Array.from({ length: 22 }, (_, c) => (
            <Cell key={c} $spill={c === 8} $open={c === 9 && r[8].length > 11}>{r[c]}</Cell>
          ))}
        </GridRow>
      ))}
    </Sheet>
  );
}

function ExcelWindow() {
  return (
    <Excel>
      <GreenHead>
        <TitleRow>
          <Lights><Dot $c="#e8202f" $b="#c21a2a" /><Dot $c="#f0a91e" $b="#cf8f1a" /><Dot $c="#12a81f" $b="#0c8d19" /></Lights>
          <Slot $w={21}><Icon w={11} h={10}><path d="M.7.700h9.600v8.600H.7zM3 .7v8.600M5 3h3.500v4.500H5z" stroke="#fff" strokeWidth="1.100" /></Icon></Slot>
          <Slot $w={22}><Icon w={10} h={8}><path d="M1 1v4h4M1.500 4.500C4 1 9 1 9 4.500 9 6 8 7 6.500 7.500" stroke="#6fa883" strokeWidth="1.200" /></Icon></Slot>
          <Caret $s={1.5} $color="#6fa883" />
          <Slot $w={27}><Icon w={9} h={10}><path d="M2.500 2.500a3.700 3.700 0 1 0 4.500 0" stroke="#fff" strokeWidth="1.400" /><path d="M1 .8h4v4z" fill="#fff" /></Icon></Slot>
          <Slot $w={15}><Icon w={10}><path d="M.6.600h8.800v8.800H.6zM2.500.600v3.500h5V.6M2.800 9.400V6.500h4.500v2.900" stroke="#fff" strokeWidth="1.200" /></Icon></Slot>
          <Slot $w={26}><Icon w={11} h={10}><path d="M2.500 3V.6h6V3M2.500 8H.6V3.500h9.800V8H8.500M2.500 6h6v3.500h-6z" stroke="#fff" strokeWidth="1.100" /></Icon></Slot>
          <Slot $w={16}><Icon w={12} h={10}><path d="M9.500 5.500v4H.6V.6H8M2.500 3.500h4M2.500 6h2" stroke="#fff" strokeWidth="1.100" /><path d="m5.500 7 5.500-6" stroke="#fff" strokeWidth="1.700" /></Icon></Slot>
          <Slot $w={26}><Icon w={5} h={5}><path d="M0 .6h5" stroke="#dfeee4" /><path d="M0 2h5L2.500 5z" fill="#dfeee4" /></Icon></Slot>
          <Slot $w={8} />
          <DocMark><Icon w={8} h={10}><path d="M0 0h5l3 3v7H0z" fill="#fff" /><path d="M5 0v3h3" stroke="#9c9" strokeWidth=".6" /></Icon></DocMark>
          <Text $size={8.63} $ml={3.5} $w={199.5} $color="#d8e9de">logs_IS---202-VO, 1718-SP _20180504-0834.csv</Text>
          <SearchSheet>
            <Magnifier s={8} color="#e4f0e8" /><Caret $s={1.5} $ml={1} $color="#e4f0e8" />
            <Text $size={7.5} $ml={3} $track={0.15}>Search Sheet</Text>
          </SearchSheet>
          <Slot $w={30}>
            <Icon w={11}><circle cx="5.500" cy="5.500" r="4.900" stroke="#fff" /><path d="M3.700 3v2M7.300 3v2" stroke="#fff" strokeWidth="1.100" /><path d="M2.800 6.300h5.400a2.700 2.500 0 0 1-5.400 0z" stroke="#fff" strokeWidth=".8" /></Icon>
          </Slot>
          <Caret $s={1.8} $ml={-7} $color="#fff" />
        </TitleRow>
        <RibbonTabs>
          <RibbonTab $w={40} $active>Home</RibbonTab>
          <Slot $w={9.5} />
          {TABS.map(([t, w]) => <RibbonTab key={t} $w={w}>{t}</RibbonTab>)}
          <Slot $w={477} />
          <Icon w={12} h={9}><circle cx="4" cy="2.400" r="2.100" fill="#fff" /><path d="M.3 9c0-5 7.400-5 7.400 0zM9.500 1v5M7 3.500h5" fill="#fff" stroke="#fff" strokeWidth=".9" /></Icon>
          <Text $size={8.5} $weight={500} $ml={3} $w={31}>Share</Text>
          <Icon w={6} h={4}><path d="m.5 3.500 2.500-3 2.500 3" stroke="#fff" strokeWidth="1.300" /></Icon>
        </RibbonTabs>
      </GreenHead>
      <RibbonPanel />
      <FormulaBar>
        <NameBox>
          <span>A1</span>
          <Icon w={6} h={12}><path d="M3 1.500 5 4.500H1zM3 10.500l2-3H1z" fill="#555" /></Icon>
        </NameBox>
        <Slot $w={28}><Icon w={7}><path d="m0 0 7 7M7 0 0 7" stroke="#bbb" strokeWidth="1.100" /></Icon></Slot>
        <Slot $w={11}><Icon w={9} h={7}><path d="m.5 4 2.500 2.500L8.500.500" stroke="#bbb" strokeWidth="1.500" /></Icon></Slot>
        <Fx>fx</Fx>
        <Text $size={8.4}>Time</Text>
        <Spacer />
        <Caret $s={2.2} $color="#444" />
      </FormulaBar>
      <Grid />
      <SheetTabs>
        <Slot $w={8}><TabArrow d="M5 0v8L0 4z" /></Slot>
        <Slot $w={22}><TabArrow d="M0 0v8l5-4z" /></Slot>
        <SheetTab>logs_IS---202-VO, 1718-SP _2018</SheetTab>
        <Slot $w={26}><TabArrow w={7} d="M3 0h1.200v3H7v1.200H4.200V7H3V4.200H0V3h3z" /></Slot>
        <TabRule />
      </SheetTabs>
      <StatusBar>
        <Text $size={8.2} $w={36}>Ready</Text>
        <Icon w={12} h={10}><circle cx="3" cy="1.500" r="1.500" fill="#222" /><path d="M3 9H1M3 3.500V9h4.500V1.200H11M6 1.200h3" stroke="#333" strokeWidth="1.100" /></Icon>
        <Text $size={8.2} $ml={579.5} $w={39.5}>Count: 9</Text>
        <ViewBtn $on><Icon w={10}><path d="M.5.500h9v9h-9zM.5 3.500h9M.5 6.500h9M3.500.500v9M6.500.500v9" stroke="#fff" /></Icon></ViewBtn>
        <ViewBtn><Icon w={10} h={9}><path d="M.5.500h9v8h-9zM2.800 2h4.400v5H2.800zM4 3.500h2M4 5h2" stroke="#666" strokeWidth=".9" /></Icon></ViewBtn>
        <ViewBtn><Icon w={10} h={9}><path d="M.5.500h9v8h-9zM3.300.500v5h3.300v-5M6.600 5.500h3" stroke="#666" strokeWidth=".9" /></Icon></ViewBtn>
        <Slot $w={14} />
        <Icon w={6} h={2}><path d="M0 1h6" stroke="#444" strokeWidth="1.300" /></Icon>
        <Slider><Knob /></Slider>
        <Icon w={6}><path d="M0 3h6M3 0v6" stroke="#333" strokeWidth="1.300" /></Icon>
        <Text $size={8.2} $ml={21}>100%</Text>
      </StatusBar>
    </Excel>
  );
}

export default function App() {
  return (
    <Desktop>
      <Global />
      <MenuBar>
        <Slot $w={11}>
          <Icon w={9} h={11}><path d="M6.400 0q.1 1.600-1.900 2.400Q4.600.7 6.400 0zM4.500 3.200c.8 0 1.200-.5 2.200-.5.9 0 1.500.5 1.900 1-1.700 1.200-1.200 3.500.3 4.200C8.300 9.500 7.600 10.500 6.700 10.500c-.8 0-1-.4-2-.4s-1.300.4-2 .4C1.300 10.500-1 6 .9 3.700c1.300-1.400 2.600-.5 3.600-.5z" fill="#222" /></Icon>
        </Slot>
        <Slot $w={12} />
        {MENUS.map(([t, w, b]) => <MenuItem key={t} $w={w} $bold={b}>{t}</MenuItem>)}
        <TrayIcons />
      </MenuBar>
      <BrowserWindow />
      <FinderWindow />
      <ExcelShadow />
      <ExcelWindow />
      <Pointer width="9" height="13"><path d="M1.500 1v9l2.100-2 1.500 3.500 1.500-.7L5.200 7.500H8z" fill="#111" stroke="#fff" strokeWidth=".8" /></Pointer>
    </Desktop>
  );
}
